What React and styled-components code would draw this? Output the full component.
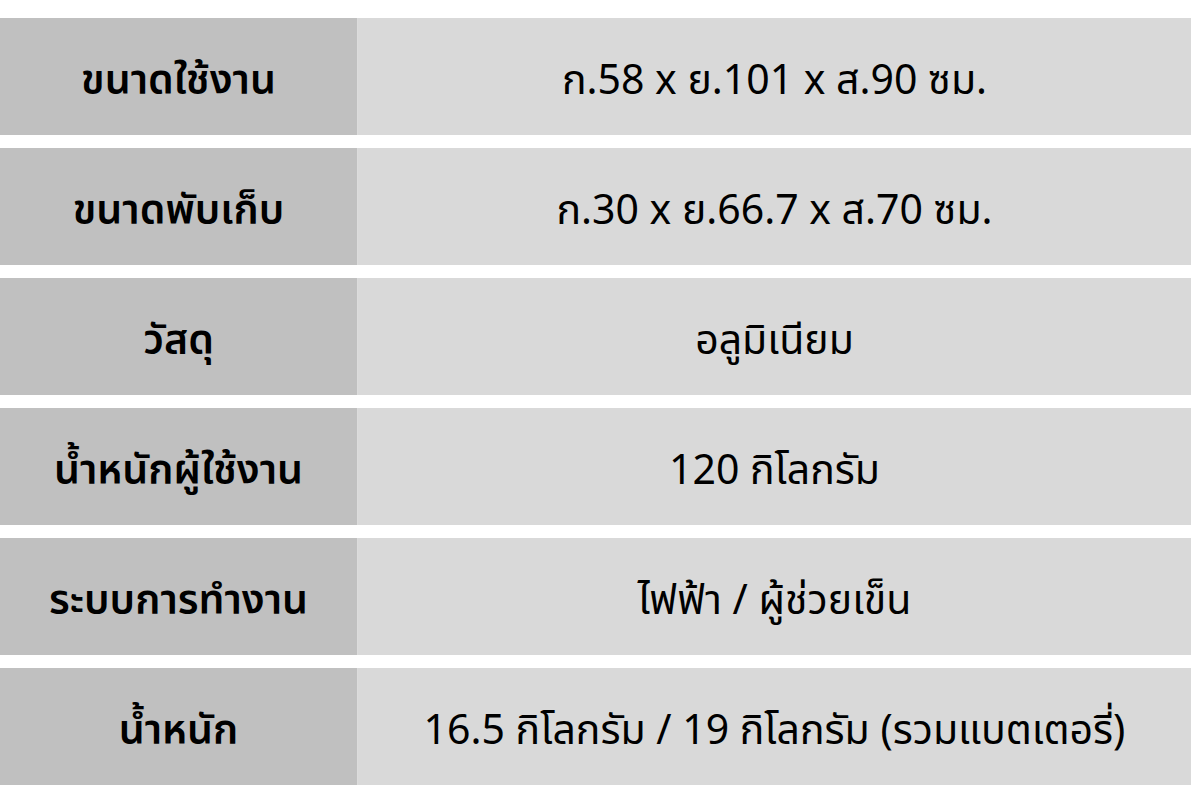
import styled, { createGlobalStyle } from 'styled-components';

const GlobalStyle = createGlobalStyle`
  html, body {
    margin: 0;
    padding: 0;
    background: #ffffff;
  }
  body {
    font-family: "Noto Sans", "Noto Sans Thai", "Liberation Sans", sans-serif;
    color: #000;
  }
`;

const specs = [
  { label: 'ขนาดใช้งาน', value: 'ก.58 x ย.101 x ส.90 ซม.' },
  { label: 'ขนาดพับเก็บ', value: 'ก.30 x ย.66.7 x ส.70 ซม.' },
  { label: 'วัสดุ', value: 'อลูมิเนียม' },
  { label: 'น้ำหนักผู้ใช้งาน', value: '120 กิโลกรัม' },
  { label: 'ระบบการทำงาน', value: 'ไฟฟ้า / ผู้ช่วยเข็น' },
  { label: 'น้ำหนัก', value: '16.5 กิโลกรัม / 19 กิโลกรัม (รวมแบตเตอรี่)' },
];

const App = () => {
  return (
    <>
      <GlobalStyle />
      <Table>
        {specs.map(spec => (
          <Row key={spec.label}>
            <LabelCell>{spec.label}</LabelCell>
            <ValueCell>{spec.value}</ValueCell>
          </Row>
        ))}
      </Table>
    </>
  );
};

const Table = styled.div`
  display: flex;
  flex-direction: column;
  gap: 13px;
  padding-top: 18px;
  width: 1191px;
  height: 800px;
  box-sizing: border-box;
`;

const Row = styled.div`
  display: grid;
  grid-template-columns: 357px 1fr;
  gap: 1px;
  height: 117px;
  background: #dcdcdc;
`;

const Cell = styled.div`
  display: flex;
  align-items: center;
  justify-content: center;
  font-size: 41px;
  line-height: 1;
  white-space: nowrap;
  padding-top: 4px;
  box-sizing: border-box;
`;

const LabelCell = styled(Cell)`
  background: #c0c0c0;
  font-weight: 600;
`;

const ValueCell = styled(Cell)`
  background: #d9d9d9;
  font-weight: 400;
`;

export default App;
